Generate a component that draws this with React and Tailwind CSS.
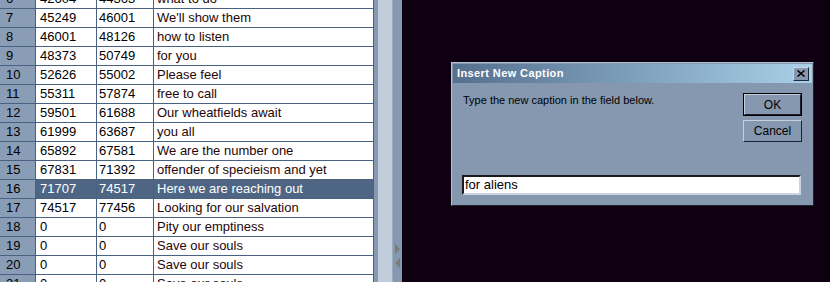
import React from "react";

const rows = [
  { n: 6, a: "42604", b: "44363", t: "what to do" },
  { n: 7, a: "45249", b: "46001", t: "We'll show them" },
  { n: 8, a: "46001", b: "48126", t: "how to listen" },
  { n: 9, a: "48373", b: "50749", t: "for you" },
  { n: 10, a: "52626", b: "55002", t: "Please feel" },
  { n: 11, a: "55311", b: "57874", t: "free to call" },
  { n: 12, a: "59501", b: "61688", t: "Our wheatfields await" },
  { n: 13, a: "61999", b: "63687", t: "you all" },
  { n: 14, a: "65892", b: "67581", t: "We are the number one" },
  { n: 15, a: "67831", b: "71392", t: "offender of specieism and yet" },
  { n: 16, a: "71707", b: "74517", t: "Here we are reaching out", sel: true },
  { n: 17, a: "74517", b: "77456", t: "Looking for our salvation" },
  { n: 18, a: "0", b: "0", t: "Pity our emptiness" },
  { n: 19, a: "0", b: "0", t: "Save our souls" },
  { n: 20, a: "0", b: "0", t: "Save our souls" },
  { n: 21, a: "0", b: "0", t: "Save our souls" },
];

function Row({ row }) {
  const cell = row.sel ? "bg-[#4e6684] text-white" : "bg-white";
  return (
    <div className="flex h-[19px] shrink-0 border-b border-[#4a6282]">
      <div className="w-[36px] shrink-0 border-r border-[#4a6282] bg-[#8a9db6] pl-[6px] leading-[18px] text-black">
        {row.n}
      </div>
      <div className={`w-[61px] shrink-0 border-r border-[#4a6282] pl-[4px] leading-[18px] ${cell} ${row.sel ? "" : "text-black"}`}>
        {row.a}
      </div>
      <div className={`w-[57px] shrink-0 border-r border-[#4a6282] pl-[2px] leading-[18px] ${cell} ${row.sel ? "" : "text-black"}`}>
        {row.b}
      </div>
      <div className={`flex-1 border-r border-[#4a6282] pl-[3px] leading-[18px] ${cell} ${row.sel ? "" : "text-[#260606]"}`}>
        {row.t}
      </div>
    </div>
  );
}

export default function App() {
  return (
    <div
      className="flex h-[282px] w-[830px] overflow-hidden bg-[#0e0010]"
      style={{ fontFamily: '"Liberation Sans", Arial, sans-serif' }}
    >
      {/* caption table */}
      <div className="flex w-[374px] shrink-0 flex-col overflow-hidden bg-white text-[13px]">
        <div className="-mt-[10px] flex flex-col">
          {rows.map((r) => (
            <Row key={r.n} row={r} />
          ))}
        </div>
      </div>

      {/* splitter */}
      <div className="w-[4px] shrink-0 bg-[#8799b2]" />
      <div className="w-[14px] shrink-0 bg-[#c2cddb]" />
      <div className="w-[1px] shrink-0 bg-[#9cacc0]" />
      <div className="flex w-[9px] shrink-0 flex-col items-center bg-[#8698b1] pt-[244px]">
        <div className="h-0 w-0 border-y-[5px] border-l-[5px] border-y-transparent border-l-[#7c7a78]" />
        <div className="mt-[4px] h-0 w-0 border-y-[5px] border-r-[5px] border-y-transparent border-r-[#7c7a78]" />
      </div>

      {/* workspace */}
      <div className="flex-1 pl-[49px] pt-[62px]">
        <div className="flex h-[144px] w-[363px] flex-col border border-t-[#b4c3d4] border-l-[#b4c3d4] border-r-[#1c2230] border-b-[#1c2230] bg-[#8598b0] p-[1px]">
          <div className="flex h-[19px] shrink-0 items-center justify-between bg-gradient-to-r from-[#55708f] to-[#a9d1e8] pl-[4px] pr-[3px]">
            <span className="text-[11px] font-bold tracking-[0.4px] text-white">Insert New Caption</span>
            <div className="flex h-[14px] w-[16px] items-center justify-center border border-t-[#c8d4e0] border-l-[#c8d4e0] border-r-[#202838] border-b-[#202838] bg-[#8598b0]">
              <svg width="8" height="7" viewBox="0 0 8 7">
                <path d="M0.5 0.5L7.5 6.5M7.5 0.5L0.5 6.5" stroke="#000" strokeWidth="1.5" />
              </svg>
            </div>
          </div>

          <div className="flex flex-1 flex-col pl-[10px] pr-[10px] pb-[9px] pt-[10px]">
            <div className="flex justify-between">
              <p className="text-[11px] leading-[14px] text-black">Type the new caption in the field below.</p>
              <div className="flex flex-col gap-[4px]">
                <button className="h-[23px] w-[59px] border border-black bg-[#8598b0] p-0">
                  <div className="flex h-full w-full items-center justify-center border border-t-[#c4d0dc] border-l-[#c4d0dc] border-r-[#1a2030] border-b-[#1a2030] text-[12px] text-black">
                    OK
                  </div>
                </button>
                <button className="flex h-[22px] w-[59px] items-center justify-center border border-t-[#c4d0dc] border-l-[#c4d0dc] border-r-[#1a2030] border-b-[#1a2030] bg-[#8598b0] text-[12px] text-black">
                  Cancel
                </button>
              </div>
            </div>
            <div className="mt-auto -ml-[1px] flex h-[20px] w-[339px] items-center border-2 border-t-[#1a1a1a] border-l-[#1a1a1a] border-r-[#c8d4e0] border-b-[#c8d4e0] bg-white pl-[1px] text-[13px] text-black">
              for aliens
            </div>
          </div>
        </div>
      </div>
    </div>
  );
}
